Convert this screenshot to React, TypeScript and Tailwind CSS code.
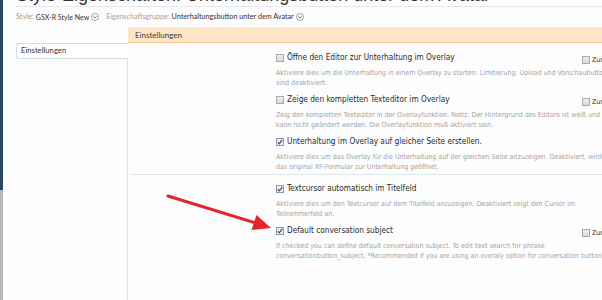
import React from "react";

type Item = {
  label: string;
  desc: string[];
  checked: boolean;
  revert: boolean;
};

const items: Item[] = [
  {
    label: "Öffne den Editor zur Unterhaltung im Overlay",
    desc: [
      "Aktiviere dies um die Unterhaltung in einem Overlay zu starten. Limitierung: Upload und Vorschaubuttons",
      "sind deaktiviert.",
    ],
    checked: false,
    revert: true,
  },
  {
    label: "Zeige den kompletten Texteditor im Overlay",
    desc: [
      "Zeig den kompletten Texteditor in der Overlayfunktion. Notiz: Der Hintergrund des Editors ist weiß und",
      "kann nicht geändert werden. Die Overlayfunktion muß aktiviert sein.",
    ],
    checked: false,
    revert: true,
  },
  {
    label: "Unterhaltung im Overlay auf gleicher Seite erstellen.",
    desc: [
      "Aktiviere dies um das Overlay für die Unterhaltung auf der gleichen Seite anzuzeigen. Deaktiviert, wird",
      "das original XF-Formular zur Unterhaltung geöffnet.",
    ],
    checked: true,
    revert: false,
  },
];

const items2: Item[] = [
  {
    label: "Textcursor automatisch im Titelfeld",
    desc: [
      "Aktiviere dies um den Textcursor auf dem Titelfeld anzuzeigen. Deaktiviert zeigt den Cursor im",
      "Teilnehmerfeld an.",
    ],
    checked: true,
    revert: false,
  },
  {
    label: "Default conversation subject",
    desc: [
      "If checked you can define default conversation subject. To edit text search for phrase",
      "conversationbutton_subject. *Recommended if you are using an overaly option for conversation button.",
    ],
    checked: true,
    revert: true,
  },
];

function Box({ checked }: { checked: boolean }) {
  return (
    <span
      className={
        "w-[8px] h-[8px] shrink-0 border flex items-center justify-center " +
        (checked
          ? "border-[#8d9aab] bg-[#eef0f6]"
          : "border-[#a9a9a9] bg-gradient-to-b from-[#f0f0f0] to-[#d9d9d9]")
      }
    >
      {checked && (
        <svg width="6" height="6" viewBox="0 0 6 6">
          <path d="M0.8 3.2 L2.3 4.8 L5.3 0.8" fill="none" stroke="#3a4a66" strokeWidth="1.1" />
        </svg>
      )}
    </span>
  );
}

function Drop() {
  return (
    <svg width="8" height="8" viewBox="0 0 8 8" className="shrink-0">
      <circle cx="4" cy="4" r="3.5" fill="#fff" stroke="#8a8a8a" strokeWidth="0.8" />
      <path d="M2.4 3.3 L4 4.9 L5.6 3.3" fill="none" stroke="#555" strokeWidth="0.9" />
    </svg>
  );
}

function Option({ item }: { item: Item }) {
  return (
    <div className="flex">
      <div className="w-[148px] shrink-0" />
      <div className="w-[306px] shrink-0">
        <div className="h-[11px] flex items-center gap-[3px]">
          <Box checked={item.checked} />
          <span className="text-[8.2px] leading-[11px] text-[#2a2a2a] whitespace-nowrap">{item.label}</span>
        </div>
        <div className="mt-[5px] text-[7px] leading-[10px] text-[#a3a3a3] whitespace-nowrap">
          {item.desc.map((d) => (
            <div key={d}>{d}</div>
          ))}
        </div>
      </div>
      {item.revert && (
        <div className="pt-[4px] flex items-start gap-[2px]">
          <Box checked={false} />
          <span className="text-[7px] leading-[8px] text-[#333] whitespace-nowrap">Zurücksetzen</span>
        </div>
      )}
    </div>
  );
}

export default function App() {
  return (
    <div
      className="w-[602px] h-[300px] overflow-hidden flex bg-[#fdfdfe] relative"
      style={{ fontFamily: '"DejaVu Sans Condensed", "Liberation Sans", sans-serif' }}
    >
      <div className="w-[3px] shrink-0 flex flex-col">
        <div className="h-[190px] bg-[#2c4862]" />
        <div className="flex-1 bg-[#b1b8be]" />
      </div>

      <div className="flex-1 flex flex-col pl-[13px] min-w-0">
        <div className="h-[7px] overflow-hidden flex items-end border-b border-[#e8e8ec]">
          <div className="text-[18px] leading-[20px] text-[#333] whitespace-nowrap mb-[1px] [font-family:'Liberation_Sans',sans-serif]">
            Style-Eigenschaften: Unterhaltungsbutton unter dem Avatar
          </div>
        </div>

        <div className="h-[20px] flex items-center [font-family:Lato,sans-serif] whitespace-nowrap">
          <span className="text-[7.4px] text-[#9a9a9a]">Style:</span>
          <span className="ml-[2px] text-[7px] text-[#333]">GSX-R Style New</span>
          <span className="ml-[2px]"><Drop /></span>
          <span className="ml-[7px] text-[7.2px] text-[#a0a0a0]">Eigenschaftsgruppe:</span>
          <span className="ml-[2px] text-[7.2px] text-[#333]">Unterhaltungsbutton unter dem Avatar</span>
          <span className="ml-[2px]"><Drop /></span>
        </div>

        <div className="flex-1 flex">
          <div className="w-[112px] shrink-0 flex flex-col pt-[16px]">
            <div className="h-[16px] border border-r-0 border-[#cfdde6] rounded-l-[3px] bg-white flex items-center pl-[4px] text-[7.7px] [font-family:Lato,sans-serif] text-[#333]">
              Einstellungen
            </div>
            <div className="flex-1 border-r border-[#d6e4ea]" />
          </div>

          <div className="flex-1 flex flex-col min-w-0">
            <div className="h-[16px] bg-[#fde5c6] border-b border-[#f2c994] rounded-tl-[3px] flex items-center pl-[7px] text-[8px] [font-family:Lato,sans-serif] text-[#4a3a2a]">
              Einstellungen
            </div>
            <div className="pt-[9px] flex flex-col gap-[6px]">
              {items.map((it) => (
                <Option key={it.label} item={it} />
              ))}
            </div>
            <div className="mt-[2px] ml-[2px] h-px bg-[#dbe8ee]" />
            <div className="pt-[8px] flex flex-col gap-[6px]">
              {items2.map((it) => (
                <Option key={it.label} item={it} />
              ))}
            </div>
          </div>
        </div>
      </div>

      <svg
        className="absolute left-0 top-0 pointer-events-none"
        width="602"
        height="300"
        viewBox="0 0 602 300"
      >
        <line x1="168" y1="196" x2="256" y2="223" stroke="#e3242b" strokeWidth="3" strokeLinecap="round" />
        <polygon points="271,228 256.5,215 251.5,230" fill="#e3242b" />
      </svg>
    </div>
  );
}
